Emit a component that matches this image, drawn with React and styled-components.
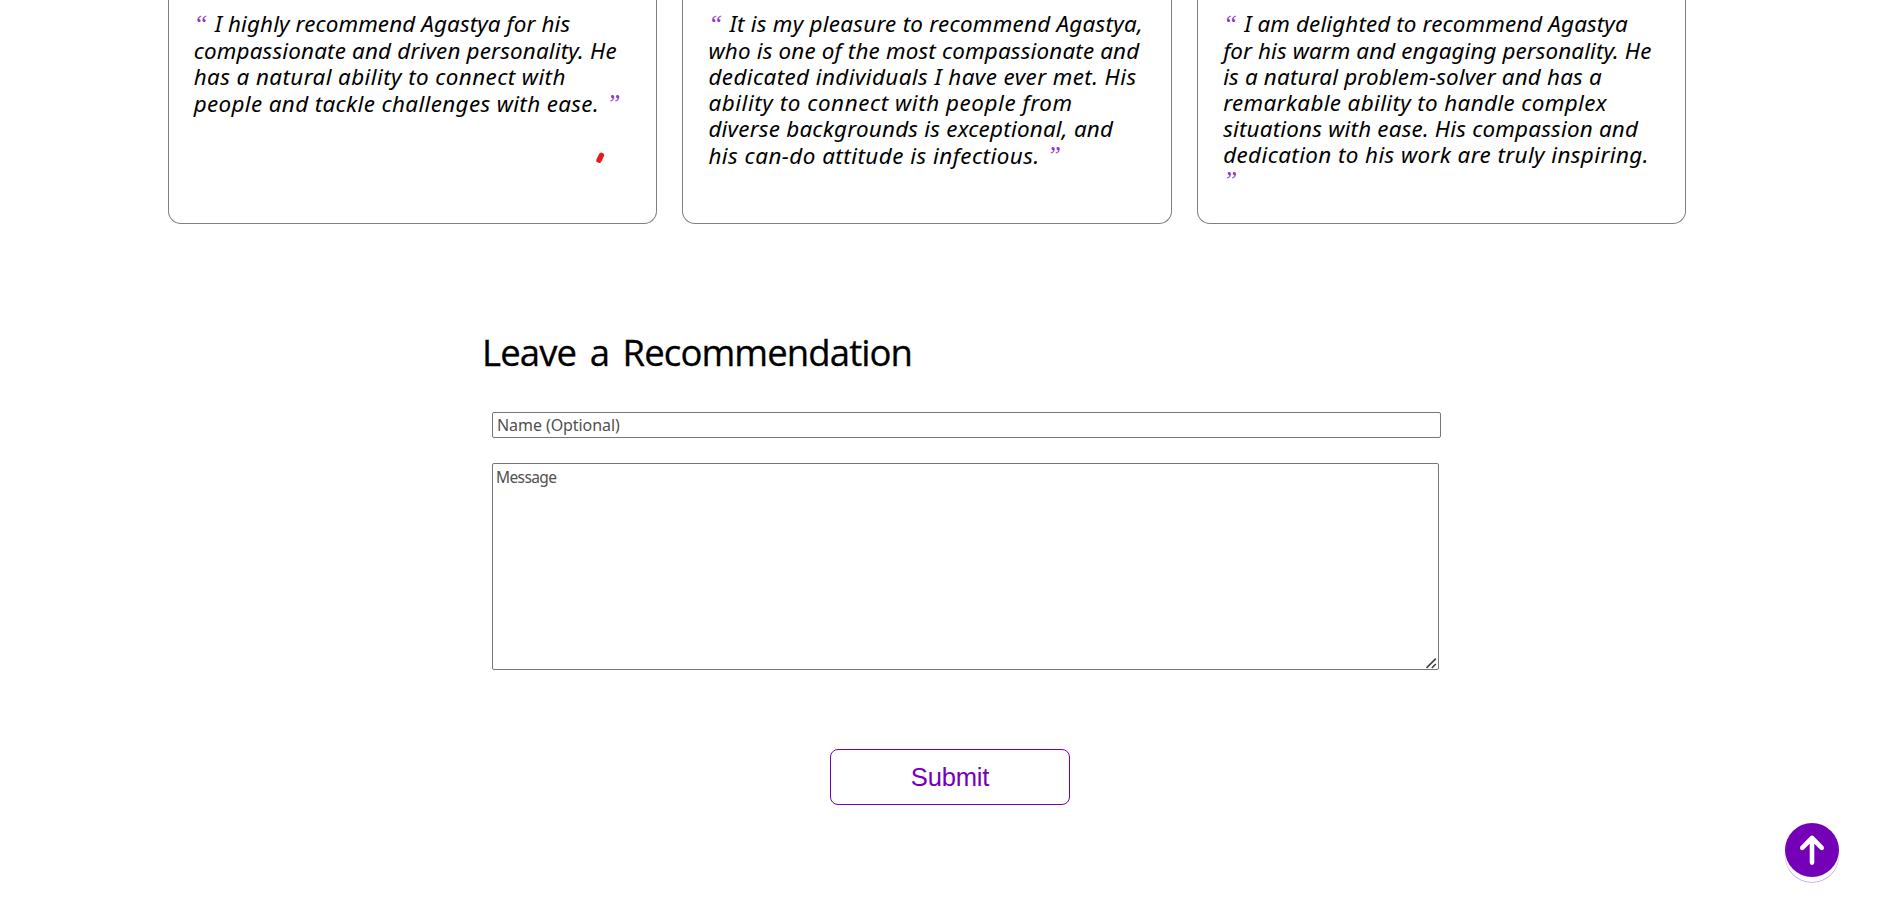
import React from 'react';
import styled, { createGlobalStyle } from 'styled-components';

const PURPLE = '#7400b8';
const SANS = '"Noto Sans", "Open Sans", sans-serif';

const GlobalStyle = createGlobalStyle`
  * { box-sizing: border-box; }
  body { margin: 0; background: #fff; color: #000; overflow: hidden; }
`;

const Page = styled.main`
  display: flex;
  flex-direction: column;
  height: 905px;
  font-family: ${SANS};
`;

const Cards = styled.section`
  display: grid;
  grid-template-columns: repeat(3, 1fr);
  gap: 25.6px;
  width: 1518.6px;
  height: 224px;
  margin-left: 167.7px;
`;

const Card = styled.article`
  position: relative;
  padding: 11px 0 0 25px;
  border: 1px solid #808080;
  border-top: 0;
  border-radius: 0 0 13px 13px;
`;

const Quote = styled.blockquote`
  margin: 0;
  font-size: 22.4px;
  font-style: italic;
  line-height: 26px;
  white-space: nowrap;
`;

const Line = styled.span`
  display: block;
  height: ${p => (p.$first ? 27 : 26)}px;
  padding-top: ${p => (p.$lowered ? 1 : 0)}px;
  letter-spacing: ${p => p.$spacing}px;
`;

const Mark = styled.span`
  display: inline-block;
  width: ${p => (p.$closing ? 'auto' : '21px')};
  padding-left: ${p => (p.$after ? 7.5 : 0)}px;
  height: 26px;
  vertical-align: top;
  color: ${PURPLE};
  opacity: 0.8;
  font: italic 25px/25px "Liberation Serif", serif;
  letter-spacing: 0;
`;

const PenStroke = styled.svg`
  position: absolute;
  left: 425.3px;
  top: 150px;
`;

const Form = styled.form`
  display: flex;
  flex-direction: column;
  width: 949px;
  margin: 100px 0 0 492px;
`;

const Title = styled.h2`
  margin: 0 0 32px -10px;
  font: 400 36.5px/56px "Open Sans", sans-serif;
  letter-spacing: -0.9px;
  word-spacing: 5px;
  -webkit-text-stroke: 0.3px #000;
`;

const NameInput = styled.input`
  width: 949px;
  height: 26px;
  padding: 1px 4px;
  border: 1px solid #767676;
  border-radius: 2px;
  font: 16px/22px ${SANS};
  letter-spacing: -0.07px;
  outline: 0;
  &::placeholder { color: #505050; }
`;

const MessageField = styled.div`
  position: relative;
  width: 947px;
  height: 207px;
  margin-top: 25px;
`;

const MessageInput = styled.textarea`
  display: block;
  width: 100%;
  height: 100%;
  padding: 2px 3px;
  border: 1px solid #767676;
  border-radius: 2px;
  font: 15.5px/22px ${SANS};
  letter-spacing: -0.6px;
  outline: 0;
  resize: none;
  &::placeholder { color: #505050; }
`;

const ResizeGrip = styled.svg`
  position: absolute;
  right: 2px;
  bottom: 1px;
`;

const SubmitButton = styled.button`
  width: 240px;
  height: 56px;
  margin: 79px 0 0 338px;
  padding: 0;
  border: 1px solid ${PURPLE};
  border-radius: 8px;
  background: #fff;
  color: ${PURPLE};
  font: 25.6px "Liberation Sans", Arial, sans-serif;
  letter-spacing: -0.2px;
`;

const ScrollTop = styled.button`
  position: fixed;
  top: 823px;
  left: 1785px;
  width: 54px;
  height: 54px;
  padding: 0;
  border: 0;
  border-radius: 50%;
  background: ${PURPLE};
  box-shadow: 0 5px 0 0 #fff, 0 5.5px 0 0.2px rgba(116, 0, 184, 0.4);
  svg { display: block; }
`;

const recommendations = [
  [
    ['I highly recommend Agastya for his', 0.12],
    ['compassionate and driven personality. He', 0.179],
    ['has a natural ability to connect with', 0.416],
    ['people and tackle challenges with ease.', 0.37],
  ],
  [
    ['It is my pleasure to recommend Agastya,', 0.27],
    ['who is one of the most compassionate and', 0.175],
    ['dedicated individuals I have ever met. His', 0.419],
    ['ability to connect with people from', 0.568],
    ['diverse backgrounds is exceptional, and', 0.23],
    ['his can-do attitude is infectious.', 0.482],
  ],
  [
    ['I am delighted to recommend Agastya', 0.13],
    ['for his warm and engaging personality. He', 0.1],
    ['is a natural problem-solver and has a', 0.18],
    ['remarkable ability to handle complex', 0.37],
    ['situations with ease. His compassion and', 0.2],
    ['dedication to his work are truly inspiring.', 0.408],
    ['', 0],
  ],
];

function Recommendation({ lines, children }) {
  return (
    <Card>
      <Quote>
        {lines.map(([text, spacing], i) => {
          const last = i === lines.length - 1;
          return (
            <Line key={i} $first={i === 0} $lowered={last && text !== ''} $spacing={spacing}>
              {i === 0 && <Mark>“</Mark>}
              {text}
              {last && <Mark $closing $after={text !== ''}>”</Mark>}
            </Line>
          );
        })}
      </Quote>
      {children}
    </Card>
  );
}

export default function App() {
  return (
    <Page>
      <GlobalStyle />
      <Cards>
        {recommendations.map((lines, i) => (
          <Recommendation key={i} lines={lines}>
            {i === 0 && (
              <PenStroke width="12" height="16" viewBox="0 0 12 16">
                <path d="M5 10.2 7.4 5.4" stroke="#e81b1b" strokeWidth="5.4" strokeLinecap="round" />
              </PenStroke>
            )}
          </Recommendation>
        ))}
      </Cards>
      <Form onSubmit={e => e.preventDefault()}>
        <Title>Leave a Recommendation</Title>
        <NameInput placeholder="Name (Optional)" />
        <MessageField>
          <MessageInput placeholder="Message" />
          <ResizeGrip width="11" height="11" viewBox="0 0 11 11" stroke="#444" strokeWidth="1.7">
            <path d="M0.5 10 9.8 0.7M5.8 10 9.8 6" />
          </ResizeGrip>
        </MessageField>
        <SubmitButton>Submit</SubmitButton>
      </Form>
      <ScrollTop aria-label="Back to top">
        <svg width="54" height="54" viewBox="0 0 54 54" fill="none" stroke="#fff" strokeWidth="4.6" strokeLinecap="round" strokeLinejoin="round">
          <path d="M27 39.6V15M17.2 24.8 27 15l9.8 9.8" />
        </svg>
      </ScrollTop>
    </Page>
  );
}
